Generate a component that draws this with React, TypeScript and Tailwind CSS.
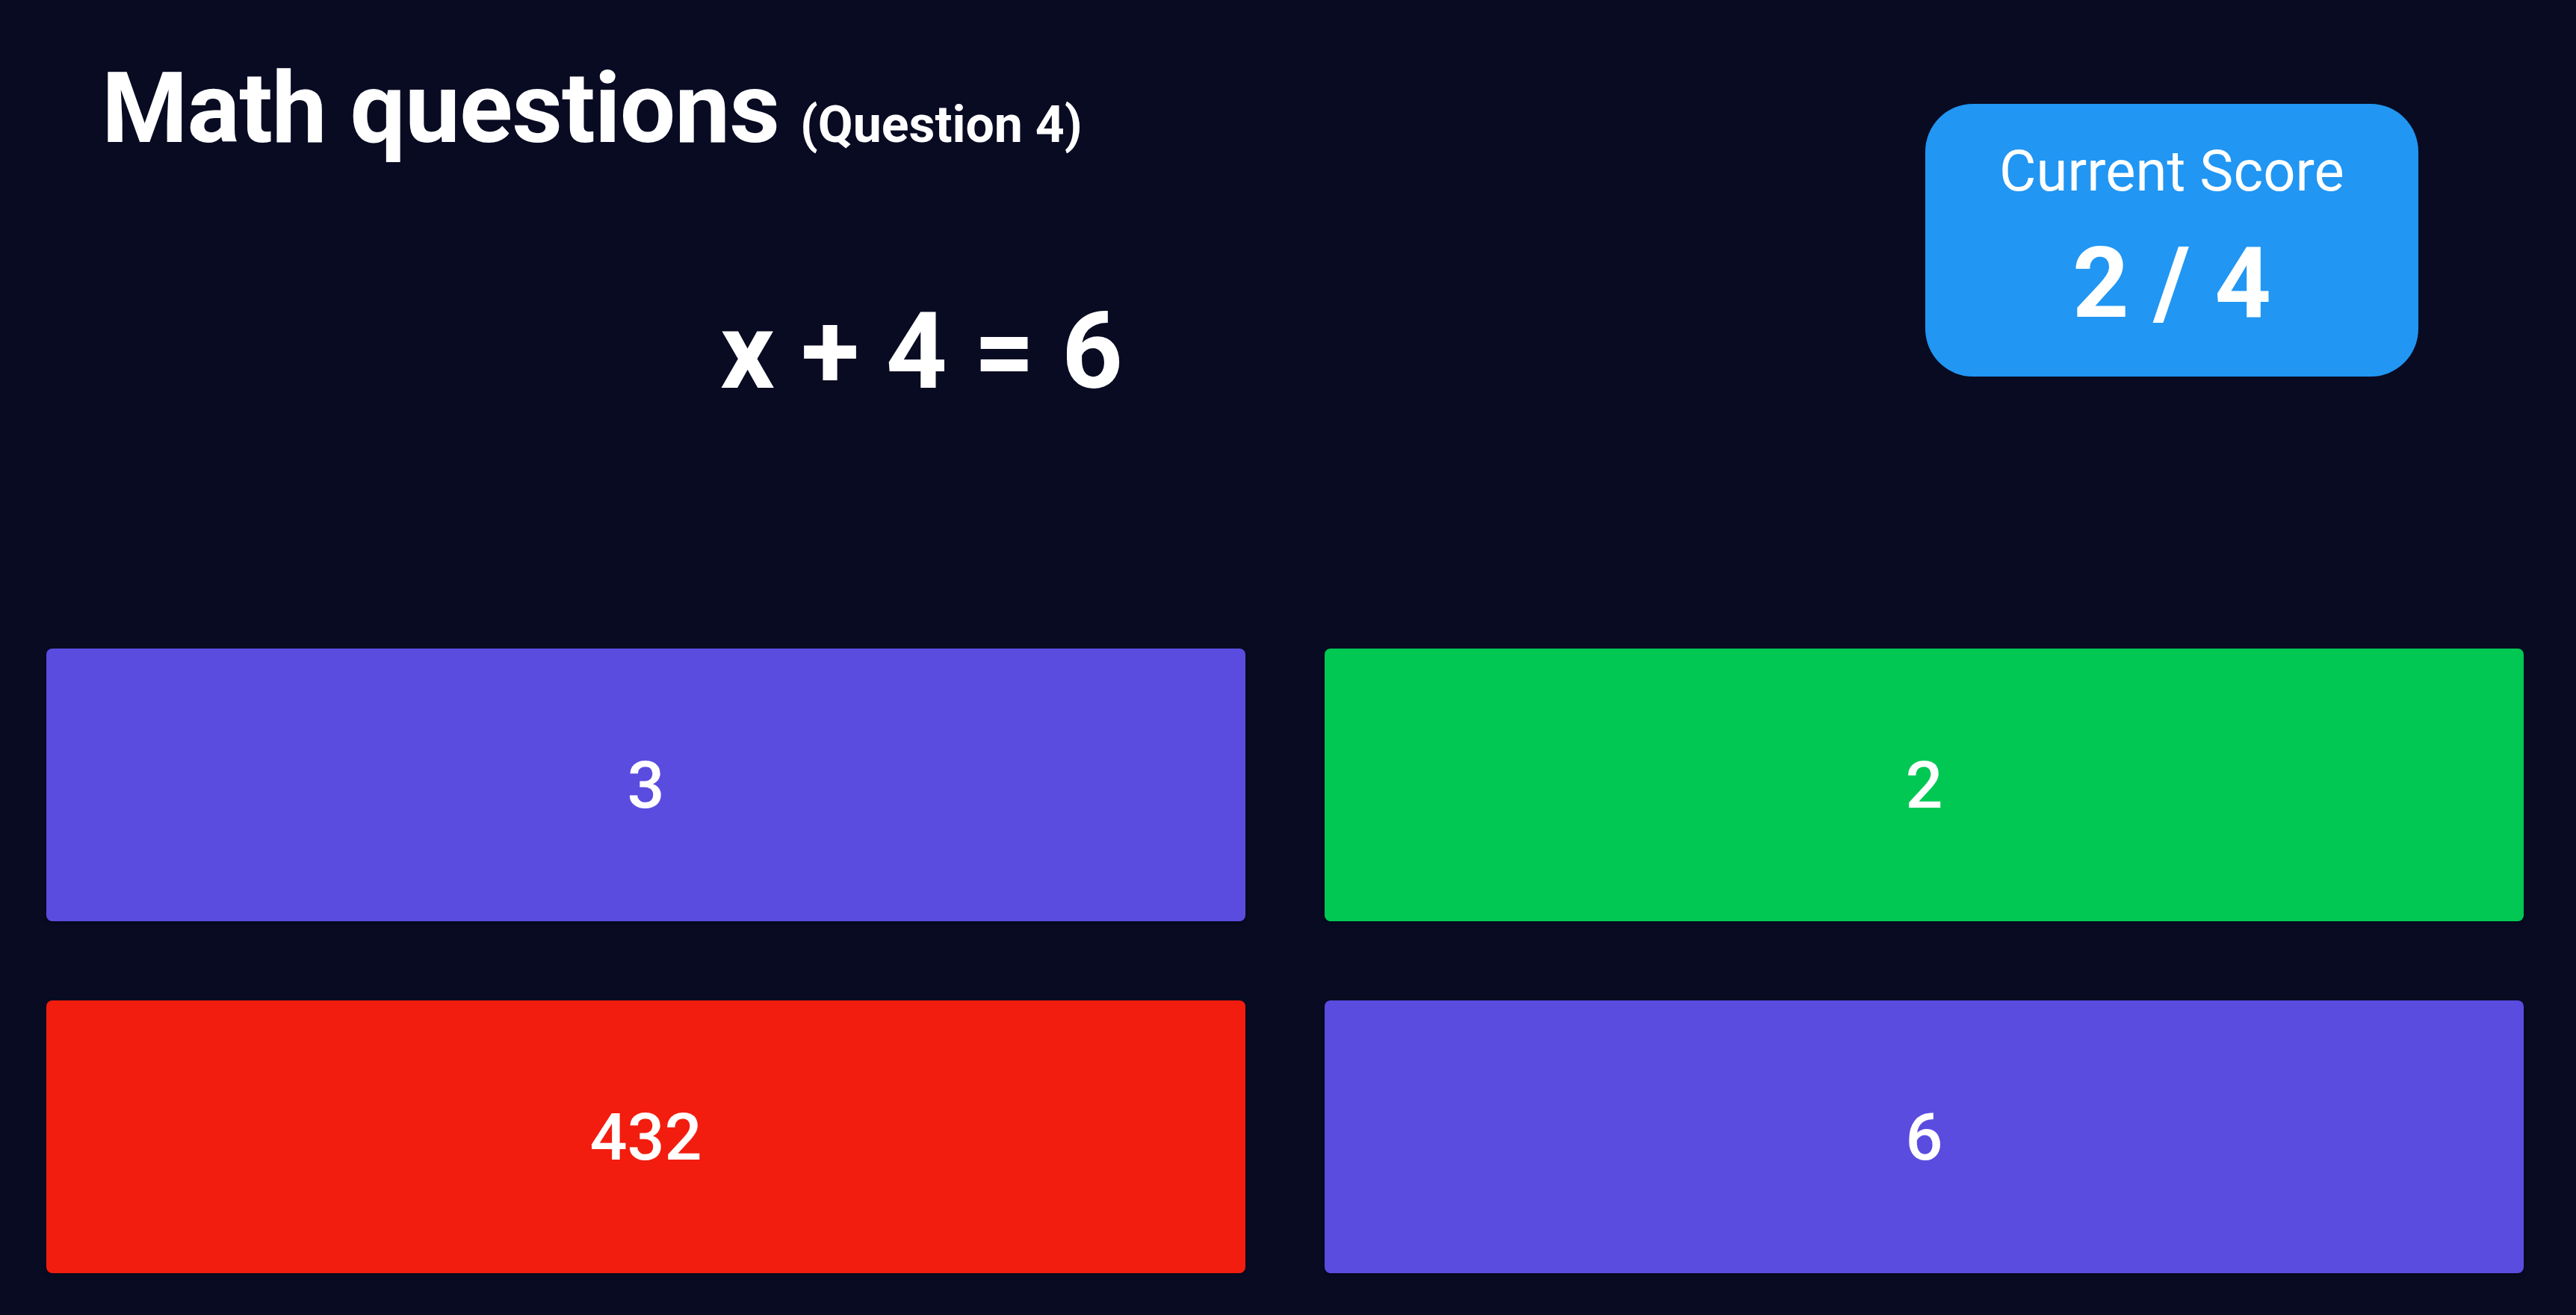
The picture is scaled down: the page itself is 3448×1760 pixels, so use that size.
const answers = [
  { label: '3', color: 'bg-[#5b4ce0]' },
  { label: '2', color: 'bg-[#00c853]' },
  { label: '432', color: 'bg-[#f21d0f]' },
  { label: '6', color: 'bg-[#5b4ce0]' },
];

export default function App() {
  return (
    <div
      className="h-screen w-full bg-[#080b22] text-white overflow-hidden"
      style={{ fontFamily: 'Roboto, "Liberation Sans", sans-serif' }}
    >
      {/* header: title + equation on the left, score card on the right */}
      <div className="flex">
        <div className="flex-1 pr-[110px]">
          <h1 className="pl-[136px] pt-[79px] flex items-baseline gap-[28px] leading-none">
            <span className="text-[132px] font-bold tracking-[-1px]">Math questions</span>
            <span className="text-[68px] font-bold">(Question 4)</span>
          </h1>
          <div className="mt-[188px] text-center text-[143px] font-bold leading-none">
            x + 4 = 6
          </div>
        </div>

        <div className="mr-[211px] mt-[139px] w-[660px] h-[365px] rounded-[64px] bg-[#2196f3] flex flex-col items-center pt-[52px]">
          <div className="text-[76px] leading-none">Current Score</div>
          <div className="mt-[46px] text-[132px] font-bold leading-none">2 / 4</div>
        </div>
      </div>

      {/* answer buttons */}
      <div className="mt-[326px] pl-[62px] pr-[70px] grid grid-cols-2 gap-[106px]">
        {answers.map((a, i) => (
          <button
            key={i}
            className={`${a.color} h-[365px] rounded-[8px] shadow-md flex items-center justify-center text-[88px] font-medium leading-none text-white`}
          >
            {a.label}
          </button>
        ))}
      </div>
    </div>
  );
}
